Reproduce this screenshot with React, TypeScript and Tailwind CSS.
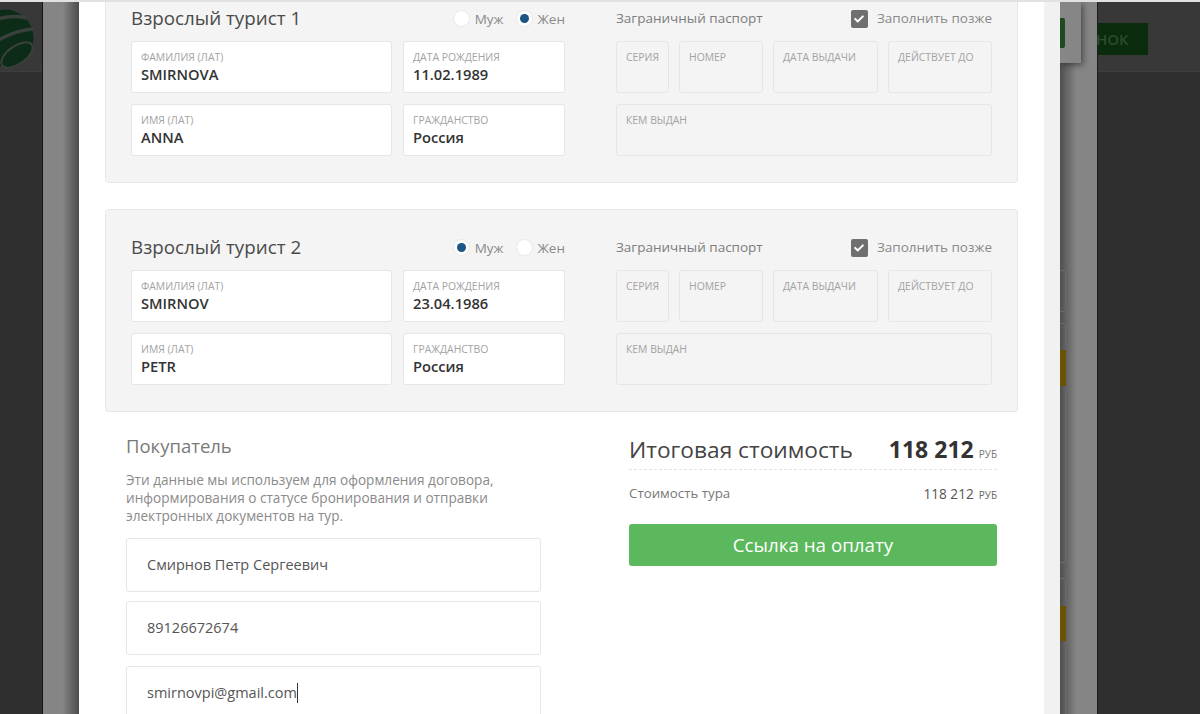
import React from 'react';
import { FaCheck } from 'react-icons/fa';

const font = 'font-["Open_Sans",sans-serif]';

const Field: React.FC<{ label: string; value: string }> = ({ label, value }) => (
  <div className="h-[52px] rounded-[3px] border border-[#e6e6e6] bg-white pl-[9px] pt-[8px]">
    <div className="text-[10.4px] leading-[14px] uppercase text-[#a3a3a3]">{label}</div>
    <div className="text-[14.7px] leading-[20px] font-semibold text-[#333]">{value}</div>
  </div>
);

const EmptyField: React.FC<{ label: string; className: string }> = ({ label, className }) => (
  <div className={`h-[52px] rounded-[3px] border border-[#e6e6e6] bg-[#f4f4f4] pl-[9px] pt-[8px] ${className}`}>
    <div className="text-[10.4px] leading-[14px] uppercase whitespace-nowrap text-[#a3a3a3]">{label}</div>
  </div>
);

const Radio: React.FC<{ label: string; checked?: boolean }> = ({ label, checked }) => (
  <div className="flex items-center gap-[5px]">
    <span className="flex h-[17px] w-[17px] items-center justify-center rounded-full border border-[#e8e8e8] bg-white">
      {checked && <span className="h-[9px] w-[9px] rounded-full bg-[#1c5586]" />}
    </span>
    <span className="text-[13.5px] leading-[20px] text-[#8a8a8a]">{label}</span>
  </div>
);

const TouristPanel: React.FC<{
  title: string;
  gender: 'm' | 'f';
  surname: string;
  name: string;
  birth: string;
  className?: string;
}> = ({ title, gender, surname, name, birth, className }) => (
  <div className={`h-[203px] w-[913px] rounded-[3px] border border-[#e8e8e8] bg-[#f4f4f4] pl-[25px] pt-[24px] ${className ?? ''}`}>
    <div className="flex">
      <div className="w-[434px]">
        <div className="flex h-[27px] items-center">
          <div className="text-[18.8px] text-[#4a4a4a]">{title}</div>
          <div className="ml-auto flex gap-[12px]">
            <Radio label="Муж" checked={gender === 'm'} />
            <Radio label="Жен" checked={gender === 'f'} />
          </div>
        </div>
        <div className="mt-[9px] grid grid-cols-[261px_162px] gap-x-[11px] gap-y-[11px]">
          <Field label="Фамилия (лат)" value={surname} />
          <Field label="Дата рождения" value={birth} />
          <Field label="Имя (лат)" value={name} />
          <Field label="Гражданство" value="Россия" />
        </div>
      </div>
      <div className="ml-[51px] w-[376px]">
        <div className="flex h-[27px] items-center justify-between">
          <div className="text-[13.5px] text-[#7d7d7d]">Заграничный паспорт</div>
          <div className="flex items-center gap-[9px]">
            <span className="flex h-[18px] w-[17px] items-center justify-center rounded-[2px] bg-[#6f6f6f] text-white">
              <FaCheck className="h-[10px] w-[10px]" />
            </span>
            <span className="text-[13.5px] text-[#8a8a8a]">Заполнить позже</span>
          </div>
        </div>
        <div className="mt-[9px] flex justify-between">
          <EmptyField label="Серия" className="w-[53px]" />
          <EmptyField label="Номер" className="w-[84px]" />
          <EmptyField label="Дата выдачи" className="w-[105px]" />
          <EmptyField label="Действует до" className="w-[104px]" />
        </div>
        <EmptyField label="Кем выдан" className="mt-[11px] w-full" />
      </div>
    </div>
  </div>
);

const BuyerInput: React.FC<{ children: React.ReactNode; className?: string }> = ({ children, className }) => (
  <div className={`flex h-[54px] w-[415px] shrink-0 items-center rounded-[3px] border border-[#e6e6e6] bg-white pl-[20px] text-[14.5px] text-[#555] ${className ?? ''}`}>
    {children}
  </div>
);

export default function App() {
  return (
    <div className={`${font} h-[714px] w-[1200px] overflow-hidden bg-[#2f2f2f]`}>
      <div className="h-[2px] bg-[#e2e2e2]" />
      <div className="flex h-[712px]">
        {/* dimmed page, left side */}
        <div className="relative h-full w-[42px] shrink-0 overflow-hidden bg-[#2f2f2f]">
          <div className="h-[70px] border-b border-[#3e3e3e] bg-[#383838]" />
          <svg className="absolute left-0 top-0" width="42" height="70" viewBox="0 0 42 70">
            <circle cx="5" cy="36" r="28.5" fill="#0c2c17" />
            <path d="M-8 19 Q 10 12 27 16" stroke="#3a403b" strokeWidth="3.5" fill="none" />
            <path d="M-8 42 Q 14 28 33 27" stroke="#3a403b" strokeWidth="3.5" fill="none" />
            <ellipse cx="17" cy="53" rx="18" ry="9" transform="rotate(-35 17 53)" fill="#0c2c17" stroke="#3a403b" strokeWidth="2" />
          </svg>
        </div>
        <div className="w-[37px] shrink-0 border-l border-[#151515] bg-[linear-gradient(90deg,#858585_0%,#858585_55%,#4c4c4c_100%)]" />

        {/* modal */}
        <div className="h-full w-[965px] shrink-0 overflow-hidden bg-white">
          <div className="-mt-[22px] flex flex-col items-start pl-[26px]">
            <TouristPanel title="Взрослый турист 1" gender="f" surname="SMIRNOVA" name="ANNA" birth="11.02.1989" />
            <TouristPanel title="Взрослый турист 2" gender="m" surname="SMIRNOV" name="PETR" birth="23.04.1986" className="mt-[26px]" />
            <div className="flex">
              <div className="ml-[21px] w-[415px]">
                <div className="mt-[21px] text-[18.5px] leading-[26px] text-[#7a7a7a]">Покупатель</div>
                <p className="mt-[12px] text-[13.6px] leading-[18px] text-[#8a8a8a]">
                  Эти данные мы используем для оформления договора, информирования о статусе бронирования и отправки электронных документов на тур.
                </p>
                <div className="mt-[13px] flex flex-col gap-[9px]">
                  <BuyerInput>Смирнов Петр Сергеевич</BuyerInput>
                  <BuyerInput>89126672674</BuyerInput>
                  <BuyerInput className="mt-[2px]">
                    smirnovpi@gmail.com<span className="h-[20px] w-px bg-[#333]" />
                  </BuyerInput>
                </div>
              </div>
              <div className="ml-[88px] w-[368px]">
                <div className="flex h-[58px] items-baseline justify-between border-b border-dashed border-[#e2e2e2] pt-[21px]">
                  <span className="text-[22.7px] leading-[32px] text-[#444]">Итоговая стоимость</span>
                  <span className="leading-[32px] text-[#333]">
                    <span className="text-[23px] font-bold">118 212</span>
                    <span className="ml-[5px] text-[10px] text-[#777]">РУБ</span>
                  </span>
                </div>
                <div className="mt-[13px] flex h-[22px] items-center justify-between text-[13.3px] text-[#777]">
                  <span>Стоимость тура</span>
                  <span className="text-[13.6px] text-[#555]">
                    118 212<span className="ml-[5px] text-[10px] text-[#666]">РУБ</span>
                  </span>
                </div>
                <button className="mt-[19px] h-[42px] w-full rounded-[3px] bg-[#5cb85c] text-[18.8px] text-white">Ссылка на оплату</button>
              </div>
            </div>
          </div>
        </div>

        {/* scrollbar track */}
        <div className="w-[16px] shrink-0 bg-[#f1f1f1]" />

        {/* dimmed page, right side, seen through the overlay */}
        <div className="relative w-[37px] shrink-0 overflow-hidden bg-[linear-gradient(90deg,#4f4f4f_0%,#858585_45%,#858585_100%)]">
          <div className="absolute left-0 top-0 h-[61px] w-[21px] bg-[#868686] shadow-[2px_2px_6px_rgba(0,0,0,0.45)]">
            <div className="absolute left-0 top-[16px] h-[30px] w-[5px] rounded-r-[2px] bg-[#1e4a20]" />
          </div>
          <div className="absolute -left-[5px] top-[268px] h-[42px] w-[11px] rounded-[3px] border border-[#6a6a6a]" />
          <div className="absolute -left-[5px] top-[321px] h-[240px] w-[11px] rounded-[3px] border border-[#6a6a6a]" />
          <div className="absolute -left-[5px] top-[576px] h-[150px] w-[11px] rounded-[3px] border border-[#6a6a6a]" />
          <div className="absolute left-0 top-[348px] h-[36px] w-[6px] bg-[#6a5200]" />
          <div className="absolute left-0 top-[604px] h-[35px] w-[6px] bg-[#6a5200]" />
        </div>
        <div className="flex-1 border-l border-[#1c1c1c] bg-[#2f2f2f]">
          <div className="h-[70px] border-b border-[#3e3e3e] bg-[#383838] pt-[21px]">
            <div className="flex h-[32px] w-[50px] items-center bg-[#0a2c0c] text-[15px] font-semibold text-[#2f4a30]">
              <span className="-ml-[2px]">НОК</span>
            </div>
          </div>
        </div>
      </div>
    </div>
  );
}
